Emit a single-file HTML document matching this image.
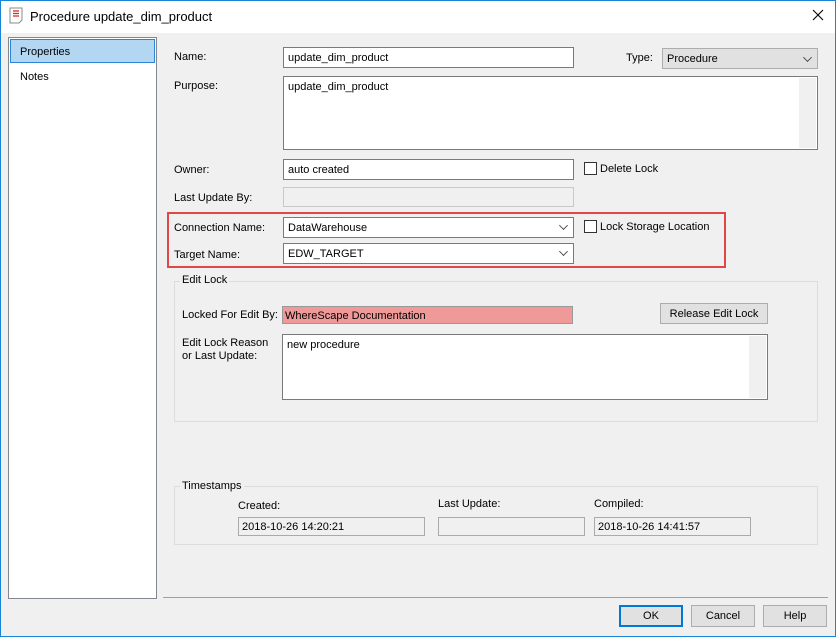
<!DOCTYPE html>
<html><head><meta charset="utf-8"><style>
*{box-sizing:border-box;margin:0;padding:0}
body{width:836px;height:637px;overflow:hidden;background:#f0f0f0;font-family:"Liberation Sans",sans-serif;font-size:11px;color:#000;position:relative}
.a{position:absolute}
.win{position:absolute;left:0;top:0;width:836px;height:637px;border:1px solid #1883d7}
.in{position:absolute;background:#fff;border:1px solid #7a7a7a;padding:4px 4px 0;white-space:nowrap}
.dis{background:#f0f0f0;border:1px solid #c8c8c8}
.cb{position:absolute;width:13px;height:13px;border:1px solid #333;background:#fff}
.btn{position:absolute;background:#e1e1e1;border:1px solid #adadad;text-align:center;line-height:20px}
.chev{position:absolute;right:6px;top:5px;width:7px;height:7px;border-right:1px solid #444;border-bottom:1px solid #444;transform:rotate(45deg) scale(.9)}
.sb{position:absolute;right:1px;top:1px;bottom:1px;width:17px;background:#f0f0f0}
.grp{position:absolute;border:1px solid #dcdcdc}
.gt{position:absolute;background:#f0f0f0;padding:0 2px}
</style></head><body>
<div class="a" style="left:0;top:0;width:836px;height:33px;background:#fff"></div>
<svg class="a" style="left:9px;top:7px" width="14" height="17" viewBox="0 0 14 17"><path d="M1 1h12v12l-3 3H1z" fill="#fff" stroke="#888"/><path d="M4 4h6M4 6.5h6M4 9h6" stroke="#d22" stroke-width="1.2"/></svg>
<div class="a" style="left:30px;top:9px;font-size:13px">Procedure update_dim_product</div>
<svg class="a" style="left:812px;top:9px" width="12" height="12"><path d="M1 1l10 10M11 1L1 11" stroke="#000" stroke-width="1.1"/></svg>

<div class="a" style="left:8px;top:37px;width:149px;height:562px;background:#fff;border:1px solid #828790"></div>
<div class="a" style="left:10px;top:39px;width:145px;height:24px;background:#b3d7f3;border:1px solid #2b84d4;padding:6px 9px">Properties</div>
<div class="a" style="left:20px;top:71px">Notes</div>

<div class="a" style="left:174px;top:51px">Name:</div>
<div class="in" style="left:283px;top:47px;width:291px;height:21px">update_dim_product</div>
<div class="a" style="left:626px;top:52px">Type:</div>
<div class="btn" style="left:662px;top:48px;width:156px;height:21px;text-align:left;padding-left:4px;line-height:20px">Procedure<div class="chev"></div></div>
<div class="a" style="left:174px;top:80px">Purpose:</div>
<div class="in" style="left:283px;top:76px;width:535px;height:74px">update_dim_product<div class="sb"></div></div>
<div class="a" style="left:174px;top:164px">Owner:</div>
<div class="in" style="left:283px;top:159px;width:291px;height:21px">auto created</div>
<div class="cb" style="left:584px;top:162px"></div>
<div class="a" style="left:600px;top:163px">Delete Lock</div>
<div class="a" style="left:174px;top:192px">Last Update By:</div>
<div class="in dis" style="left:283px;top:187px;width:291px;height:20px"></div>

<div class="a" style="left:167px;top:212px;width:559px;height:56px;border:2px solid #e04848"></div>
<div class="a" style="left:174px;top:222px">Connection Name:</div>
<div class="in" style="left:283px;top:217px;width:291px;height:21px">DataWarehouse<div class="chev" style="top:4px"></div></div>
<div class="cb" style="left:584px;top:220px"></div>
<div class="a" style="left:600px;top:221px">Lock Storage Location</div>
<div class="a" style="left:174px;top:249px">Target Name:</div>
<div class="in" style="left:283px;top:243px;width:291px;height:21px">EDW_TARGET<div class="chev" style="top:4px"></div></div>

<div class="grp" style="left:174px;top:281px;width:644px;height:141px"></div>
<div class="gt" style="left:180px;top:274px">Edit Lock</div>
<div class="a" style="left:182px;top:309px">Locked For Edit By:</div>
<div class="in" style="left:282px;top:306px;width:291px;height:18px;background:#f09999;border-color:#999;padding:3px 2px 0">WhereScape Documentation</div>
<div class="btn" style="left:660px;top:303px;width:108px;height:21px">Release Edit Lock</div>
<div class="a" style="left:182px;top:337px;line-height:13px">Edit Lock Reason<br>or Last Update:</div>
<div class="in" style="left:282px;top:334px;width:486px;height:66px">new procedure<div class="sb"></div></div>

<div class="grp" style="left:174px;top:486px;width:644px;height:59px"></div>
<div class="gt" style="left:180px;top:480px">Timestamps</div>
<div class="a" style="left:238px;top:500px">Created:</div>
<div class="in dis" style="left:238px;top:517px;width:187px;height:19px;border-color:#aaa;padding:3px 3px 0">2018-10-26 14:20:21</div>
<div class="a" style="left:438px;top:498px">Last Update:</div>
<div class="in dis" style="left:438px;top:517px;width:147px;height:19px;border-color:#aaa"></div>
<div class="a" style="left:594px;top:498px">Compiled:</div>
<div class="in dis" style="left:594px;top:517px;width:157px;height:19px;border-color:#aaa;padding:3px 3px 0">2018-10-26 14:41:57</div>

<div class="a" style="left:163px;top:597px;width:665px;height:1px;background:#a0a0a0"></div>
<div class="btn" style="left:619px;top:605px;width:64px;height:22px;border:2px solid #0078d7;line-height:18px">OK</div>
<div class="btn" style="left:691px;top:605px;width:64px;height:22px">Cancel</div>
<div class="btn" style="left:763px;top:605px;width:64px;height:22px">Help</div>
<div class="win"></div>
</body></html>
